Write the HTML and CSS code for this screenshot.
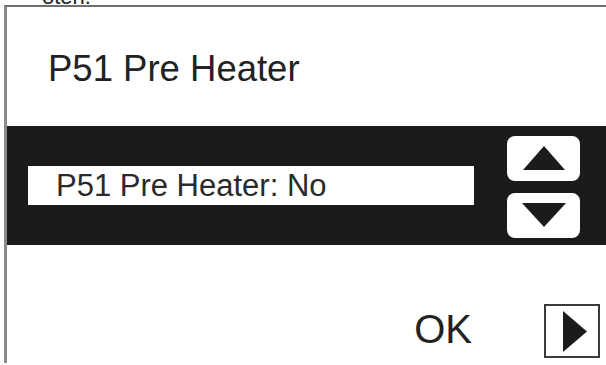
FILE: index.html
```html
<!DOCTYPE html>
<html lang="en">
<head>
    <meta charset="UTF-8">
    <meta name="viewport" content="width=device-width, initial-scale=1.0">
    <title>P51 Pre Heater</title>
    <link rel="stylesheet" href="styles.css">
</head>
<body>
    <div class="caption"><span>oten.</span></div>

    <div class="screen">
        <div class="screen-title">P51 Pre Heater</div>

        <div class="screen-band">
            <div class="value-field">P51 Pre Heater: No</div>
            <div class="step-buttons">
                <div class="step-btn">
                    <svg width="42" height="24" viewBox="0 0 42 24"><polygon points="21,0 42,24 0,24" fill="#1c1a1b"/></svg>
                </div>
                <div class="step-btn">
                    <svg width="44" height="24" viewBox="0 0 44 24"><polygon points="0,0 44,0 22,24" fill="#1c1a1b"/></svg>
                </div>
            </div>
        </div>

        <div class="screen-footer">
            <div class="ok-label">OK</div>
            <div class="next-btn">
                <svg width="24" height="41" viewBox="0 0 24 41"><polygon points="0,0 24,20.5 0,41" fill="#1c1a1b"/></svg>
            </div>
        </div>
    </div>
</body>
</html>
```

FILE: styles.css
```css
body {
    font-family: "Liberation Sans", Arial, sans-serif;
    background-color: #fff;
    color: #222;
    margin: 0;
    padding: 0;
    overflow: hidden;
}

.caption {
    height: 5px;
    overflow: hidden;
    padding-left: 42px;
}

.caption span {
    display: block;
    font-size: 22px;
    line-height: 22px;
    margin-top: -14px;
}

.screen {
    margin-left: 4px;
    height: 358px;
    box-sizing: border-box;
    border-top: 2px solid #6e6e6e;
    border-left: 3px solid #8a8a8a;
}

.screen-title {
    height: 119px;
    box-sizing: border-box;
    display: flex;
    align-items: center;
    padding-left: 41px;
    padding-top: 5px;
    font-size: 36.5px;
    line-height: 1;
}

.screen-band {
    height: 119px;
    background-color: #1c1a1b;
    display: flex;
    align-items: center;
    padding-left: 21px;
}

.value-field {
    width: 446px;
    height: 39px;
    background-color: #fff;
    display: flex;
    align-items: center;
    padding-left: 28px;
    box-sizing: border-box;
    font-size: 31px;
    line-height: 1;
    color: #2a2a2a;
}

.step-buttons {
    margin-left: 33px;
    margin-top: 2px;
    display: flex;
    flex-direction: column;
    gap: 12px;
}

.step-btn {
    width: 73px;
    height: 45px;
    background-color: #fff;
    border-radius: 8px;
    display: flex;
    align-items: center;
    justify-content: center;
}

.screen-footer {
    display: flex;
    align-items: center;
    justify-content: flex-end;
    padding-top: 59px;
    padding-right: 6px;
    gap: 72px;
}

.ok-label {
    font-size: 40px;
    line-height: 1;
    margin-bottom: 4px;
}

.next-btn {
    width: 56px;
    height: 54px;
    box-sizing: border-box;
    border: 2px solid #3a3a3a;
    display: flex;
    align-items: center;
    padding-left: 17px;
}
```
